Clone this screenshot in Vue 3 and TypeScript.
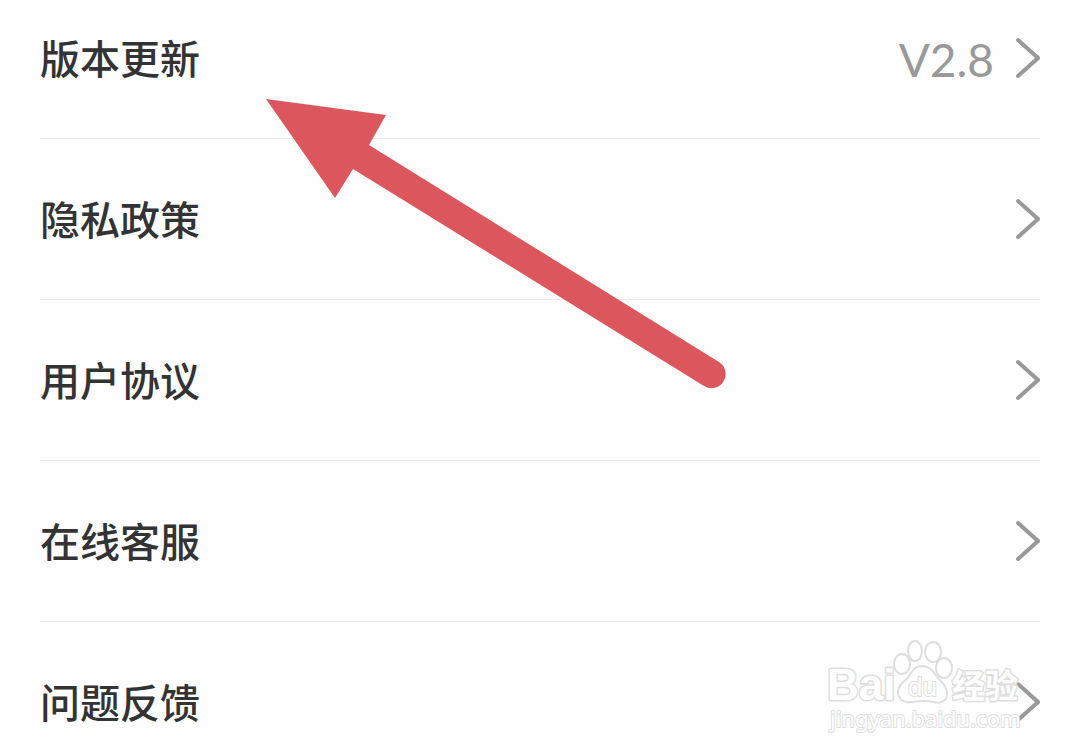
<script setup lang="ts">
interface MenuItem {
  label: string
  value?: string
}

const items: MenuItem[] = [
  { label: '版本更新', value: 'V2.8' },
  { label: '隐私政策' },
  { label: '用户协议' },
  { label: '在线客服' },
  { label: '问题反馈' },
]
</script>

<template>
  <main class="page">
    <ul class="menu">
      <li v-for="item in items" :key="item.label" class="row">
        <button type="button" class="entry">
          <span class="label">{{ item.label }}</span>
          <span v-if="item.value" class="value">{{ item.value }}</span>
          <svg class="chevron" viewBox="0 0 26 42" aria-hidden="true">
            <path d="M4 3 L24 21 L4 39" />
          </svg>
        </button>
      </li>
    </ul>

    <svg class="arrow" viewBox="0 0 462 292" aria-hidden="true">
      <path d="M1 1 L121 17 L104 47 L454 264 A14 14 0 0 1 439 288 L88 71 L70 100 Z" />
    </svg>

    <svg class="watermark" viewBox="0 0 200 100" role="img" aria-label="Baidu 经验">
      <g class="outline">
        <text class="brand" x="2" y="63">Bai</text>
        <path d="M97 29 C105 29 108 35 113 41 C118 46 122 50 122 57 C122 64 116 67 109 65 C101 63 94 64 86 65 C78 66 73 62 73 55 C73 47 80 45 84 39 C88 33 90 29 97 29 Z" />
        <ellipse cx="77" cy="27" rx="8" ry="10" />
        <ellipse cx="90" cy="14" rx="7" ry="10" />
        <ellipse cx="108" cy="15" rx="8" ry="10" />
        <ellipse cx="119" cy="31" rx="8" ry="10" />
        <text class="du" x="83" y="59">du</text>
        <text class="jingyan" x="127" y="61">经验</text>
        <text class="site" x="5" y="90">jingyan.baidu.com</text>
      </g>
    </svg>
  </main>
</template>

<style>
body {
  margin: 0;
  background: #fefefe;
}
</style>

<style scoped>
.page {
  position: relative;
  height: 100vh;
  overflow: hidden;
  background: #fefefe;
  font-family: "Noto Sans CJK SC", sans-serif;
}

/* The list is scrolled slightly past its first row's top edge. */
.menu {
  margin: -22px 0 0;
  padding: 0 40px;
  list-style: none;
}

.row {
  border-bottom: 1px solid #ebebeb;
}

.entry {
  display: flex;
  align-items: center;
  width: 100%;
  height: 160px;
  padding: 0;
  border: 0;
  background: none;
  font-family: inherit;
  text-align: left;
}

.label {
  flex: 1;
  padding-bottom: 2px;
  color: #333;
  font-size: 40px;
  font-weight: 500;
  line-height: 60px;
}

.value {
  margin-right: 20px;
  padding-top: 4px;
  color: #999;
  font-family: Lato, "Liberation Sans", sans-serif;
  font-size: 46px;
  line-height: 60px;
}

.chevron {
  width: 26px;
  height: 42px;
  fill: none;
  stroke: #999;
  stroke-width: 4;
  stroke-linecap: round;
}

.arrow {
  position: absolute;
  top: 98px;
  left: 265px;
  width: 462px;
  height: 292px;
  fill: #db575d;
  pointer-events: none;
}

.watermark {
  position: absolute;
  right: 55px;
  bottom: 19px;
  width: 200px;
  height: 100px;
  pointer-events: none;
}

.outline {
  fill: #fefefe;
  stroke: #dedede;
  stroke-width: 2;
}

.outline text {
  stroke-width: 3;
  stroke-linejoin: round;
  paint-order: stroke;
}

.brand {
  font: 700 44px "Liberation Sans", sans-serif;
}

.outline .du {
  font: 400 26px "Liberation Sans", sans-serif;
  stroke-width: 2;
}

.jingyan {
  font: 700 33px "Noto Sans CJK SC", sans-serif;
}

.outline .site {
  font: 400 22px "Noto Sans", sans-serif;
  stroke-width: 2;
}
</style>
